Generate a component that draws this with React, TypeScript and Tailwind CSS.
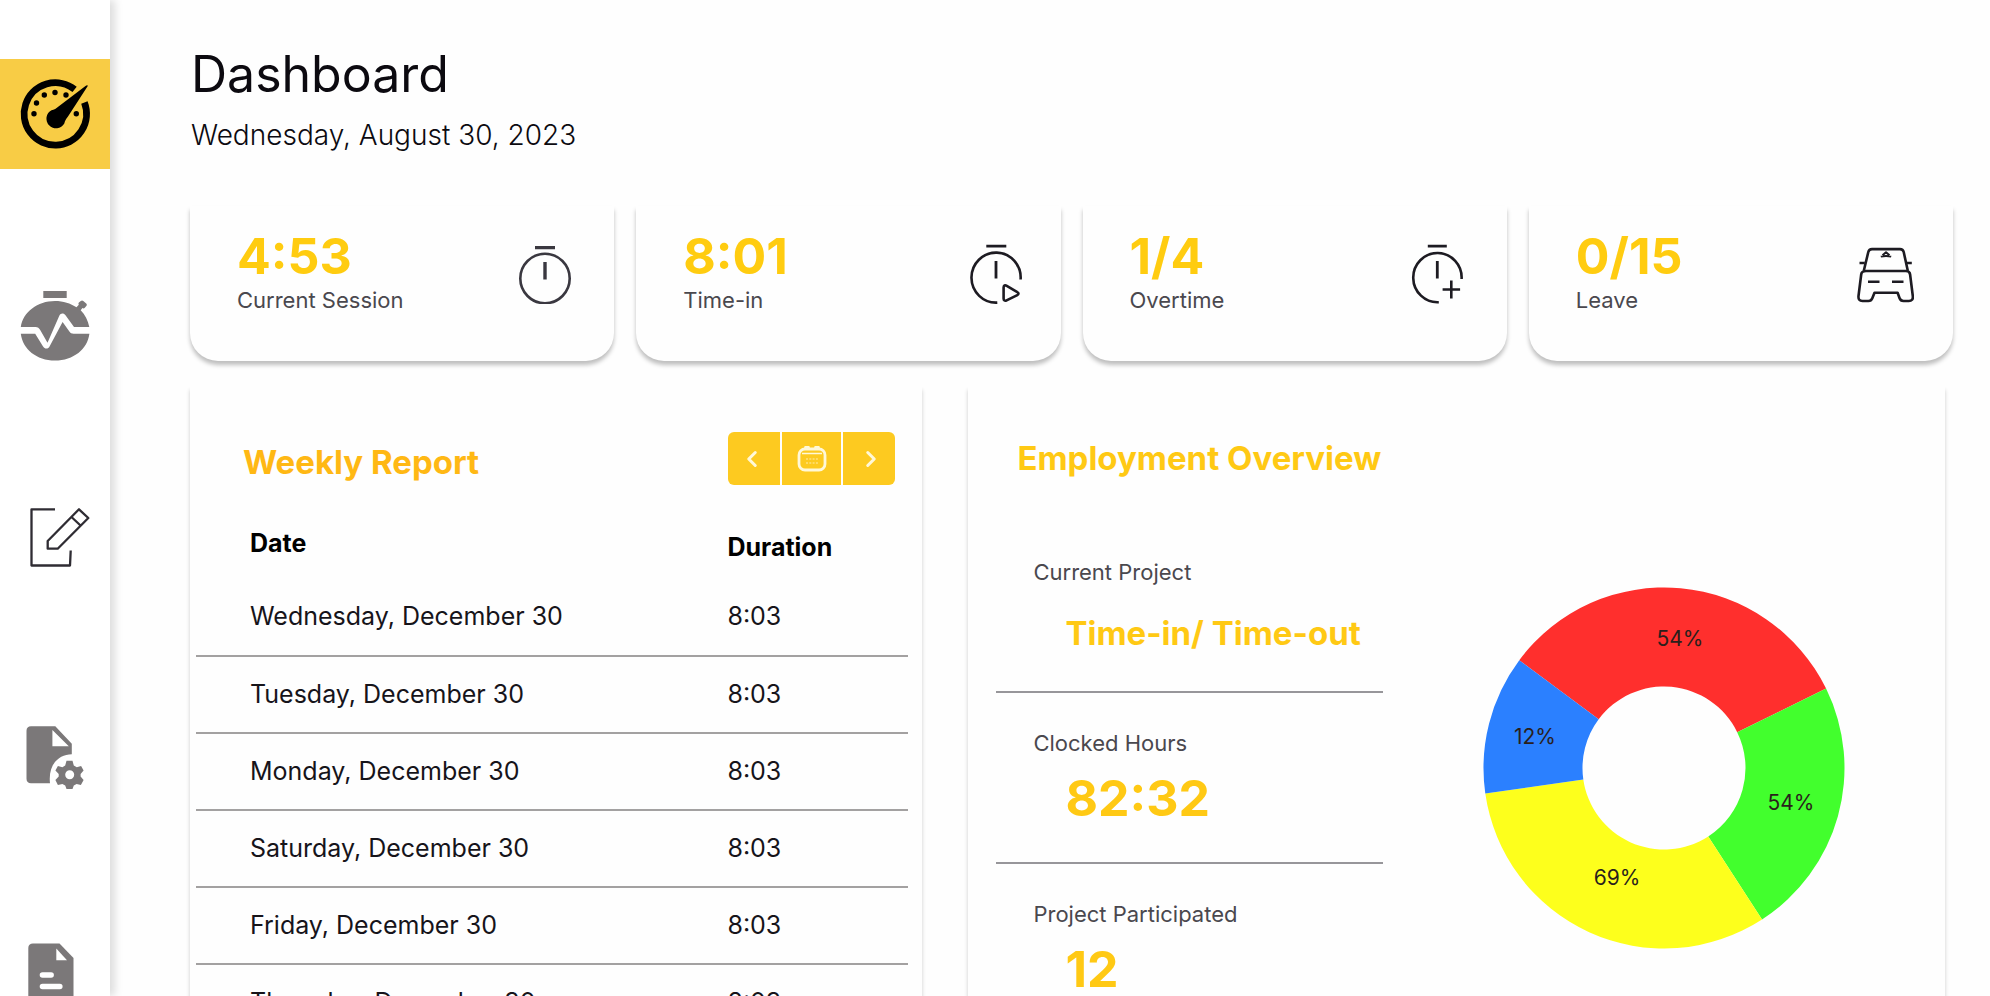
import type { ReactNode } from 'react'
import { LuChevronLeft, LuChevronRight } from 'react-icons/lu'

const days = ['Wednesday', 'Tuesday', 'Monday', 'Saturday', 'Friday', 'Thursday']

const overview = [
  { label: 'Current Project', value: 'Time-in/ Time-out', small: true },
  { label: 'Clocked Hours', value: '82:32', small: false },
  { label: 'Project Participated', value: '12', small: false },
]

// angles are degrees clockwise from 12 o'clock
const slices = [
  { label: '54%', from: -53.3, to: 63.9, color: '#ff2f2d', x: 197, y: 51 },
  { label: '54%', from: 63.9, to: 147.1, color: '#42ff2d', x: 308, y: 215 },
  { label: '69%', from: 147.1, to: 261.9, color: '#fdff1c', x: 134, y: 290 },
  { label: '12%', from: 261.9, to: 306.7, color: '#2b80ff', x: 52, y: 149 },
]

function point(r: number, deg: number) {
  const a = (deg * Math.PI) / 180
  return `${(181 + r * Math.sin(a)).toFixed(2)} ${(181 - r * Math.cos(a)).toFixed(2)}`
}

function slicePath(from: number, to: number) {
  return `M${point(180.5, from)}A180.5 180.5 0 0 1 ${point(180.5, to)}L${point(81.5, to)}A81.5 81.5 0 0 0 ${point(81.5, from)}Z`
}

function GaugeIcon() {
  return (
    <svg viewBox="0 0 110 110" className="h-full w-full">
      <path d="M74.6 30.4A31.2 31.2 0 1 0 84.4 43.6" fill="none" stroke="#000" strokeWidth="6.8" />
      <path d="M87.6 27.2L68 57.5C66 60 64.8 62 64.3 64.5A9.6 9.6 0 1 1 51.5 51.2C54 50.8 56.5 49.5 58.5 47.5L85.5 26.9C87 26 88 26.3 87.6 27.2Z" fill="#000" />
      <circle cx="34" cy="54.7" r="2.7" />
      <circle cx="36.5" cy="44" r="2.7" />
      <circle cx="44.3" cy="36" r="2.7" />
      <circle cx="55" cy="33.5" r="2.7" />
      <circle cx="66" cy="36" r="2.7" />
      <circle cx="76.3" cy="54.7" r="2.7" />
    </svg>
  )
}

function PulseWatchIcon() {
  return (
    <svg viewBox="0 0 110 110" className="h-full w-full" fill="#7b7879">
      <path d="M43.3 18h23.4v7H43.3z" />
      <path d="M20.8 54C23 39 37.5 28 55 28c8.300 0 15.500 2.300 21.500 6.300l2.300-2.600c-.6-.9-.4-1.900.4-2.500l1.600-1.300c.8-.7 1.700-.7 2.500 0l2.900 2.700c.8.8.8 1.700.1 2.500l-1.500 1.700c-.7.7-1.500.8-2.400.3l-1.700 2.200C85 41.500 88 47.500 89.300 54H74L65.500 42.300c-1.800-2.600-4.900-2.400-6.200.4L47.500 69.800 40.200 57c-1.200-2-2.300-3-4.700-3z" />
      <path d="M20.8 60.7h14.400l7.700 12.500c2 3.200 5.300 3 6.900-.3L62.600 49l6.600 9.300c1.300 1.800 2.400 2.400 4.400 2.400h15.800C87.500 76 73.500 87.500 55 87.500S22.700 76 20.800 60.700z" />
    </svg>
  )
}

function EditIcon() {
  return (
    <svg viewBox="0 0 110 110" className="h-full w-full" fill="none" stroke="#2f2c33" strokeWidth="2.3" strokeLinejoin="round">
      <path d="M55 22.300H31.500V78.500H70L70.700 63.500" />
      <path d="M47.700 61.700V54L79 22.300L88.300 31L57.700 61.700ZM72 30.500L80 38" />
    </svg>
  )
}

function FileGearIcon() {
  return (
    <svg viewBox="0 0 110 110" className="h-full w-full" fill="#7b7879">
      <path d="M31 25.300h24.300l16.500 17.500v10.400C58.500 53.500 48 63.500 50 82.300H31c-2.800 0-4.500-1.700-4.500-4.500v-48c0-2.800 1.700-4.500 4.500-4.500zM52.400 29v16.200h16.400z" />
      <path fillRule="evenodd" d="M66.500 59.800h6l1.300 4.800 3 1.700 4.300-1.400 2.500 4.600-3 3.400v2.600l3 3.400-2.700 5.200-4.300-1.100-2.800 1.600-1.300 3.400h-6l-1.300-3.400-2.800-1.600-4.500 1.100-2.500-5.200 3.300-3.400v-2.600l-3.300-3.400 2.500-4.600 4.500 1.400 2.800-1.700zM69.700 69.200a4.500 4.500 0 1 0 0 9 4.500 4.500 0 0 0 0-9z" />
    </svg>
  )
}

function FileIcon() {
  return (
    <svg viewBox="0 0 110 110" className="h-full w-full">
      <path d="M33 28.500h26.500L73.500 43v42c0 3-1.500 4.500-4.500 4.500H33c-3 0-4.700-1.500-4.700-4.500V33c0-3 1.700-4.500 4.700-4.500z" fill="#7b7879" />
      <path d="M56.300 33.500v11.800H67z" fill="#fff" />
      <path d="M42.500 60h8.600M42.500 71.500h17.300" stroke="#fff" strokeWidth="5.6" strokeLinecap="round" />
    </svg>
  )
}

function CalendarIcon() {
  return (
    <svg viewBox="0 0 32 30" className="h-[30px] w-8" fill="none" stroke="#fff8d8" strokeWidth="2.8">
      <rect x="3" y="5" width="26" height="21" rx="6" />
      <path d="M6 9.500h20" strokeWidth="1.5" />
      <path d="M9.500 3.400h3M19.500 3.400h3" strokeLinecap="round" />
      <path d="M10 15h12M10 19h12" strokeWidth="1.5" strokeDasharray="2 1.3" opacity="0.5" />
    </svg>
  )
}

const watchProps = {
  viewBox: '0 0 60 60',
  className: 'h-[60px] w-[60px]',
  fill: 'none',
  stroke: '#1d1b22',
  strokeWidth: 2.6,
}

const stats: { value: string; label: string; icon: ReactNode }[] = [
  {
    value: '4:53',
    label: 'Current Session',
    icon: (
      <svg {...watchProps} stroke="#3a3840">
        <circle cx="30" cy="34.5" r="24.7" />
        <path d="M20 3.600h20M30 18v17.500" strokeWidth="3.4" />
      </svg>
    ),
  },
  {
    value: '8:01',
    label: 'Time-in',
    icon: (
      <svg {...watchProps}>
        <path d="M58.600 35.500A24.600 25 0 1 0 35.300 58.600" />
        <path d="M24.300 2.200h20M34 17v17.500" strokeWidth="2.8" />
        <path d="M41.600 43.500v11c0 2 1.300 2.700 3 1.800l10.700-5.200c1.600-.8 1.600-2.200 0-3l-10.500-6.300c-1.800-1-3.200-.3-3.200 1.700z" />
      </svg>
    ),
  },
  {
    value: '1/4',
    label: 'Overtime',
    icon: (
      <svg {...watchProps}>
        <path d="M53.600 35A24.200 24.600 0 1 0 30.800 58.200" />
        <path d="M19.800 2.200h19M29.300 17v17.500" strokeWidth="2.8" />
        <path d="M34.600 45.500h17.500M43.300 36.500v18" />
      </svg>
    ),
  },
  {
    value: '0/15',
    label: 'Leave',
    icon: (
      <svg {...watchProps} strokeLinejoin="round">
        <path d="M9.800 26.700L14.300 8c.5-2 1.700-2.900 3.700-2.900h28c2 0 3.200.9 3.700 2.900l4.100 18.700" />
        <path d="M12 27h40c2.500 0 3.800 1 4.100 3.500l2.700 21.500c.4 3.400-1 5-4 5h-5.300c-2 0-3.200-.7-3.900-2.700l-2-5.600H20.500l-2.200 5.600c-.8 2-1.800 2.700-3.900 2.700H8.500c-3 0-4.300-1.600-4-5l2.700-21.500C7.500 28 9 27 12 27z" />
        <path d="M14 37.700h11.500M38 37.700h11.500M5.500 19h5.300M52.500 19h5.300" />
        <path d="M26.800 12.600c3.500-.8 7-.8 10.400 0M28.500 11.300l3.500-3 3.500 3" strokeWidth="2" />
      </svg>
    ),
  },
]

const navItems = [
  { name: 'Dashboard', icon: <GaugeIcon />, active: true },
  { name: 'Sessions', icon: <PulseWatchIcon />, active: false },
  { name: 'Edit', icon: <EditIcon />, active: false },
  { name: 'File settings', icon: <FileGearIcon />, active: false },
  { name: 'Documents', icon: <FileIcon />, active: false },
]

function Sidebar() {
  return (
    <nav className="flex w-[110px] shrink-0 flex-col gap-[104px] bg-white pt-[59px] shadow-[5px_0_8px_rgba(0,0,0,0.13)]">
      {navItems.map(item => (
        <a
          key={item.name}
          href="#"
          aria-label={item.name}
          className={item.active ? 'block h-[110px] shrink-0 bg-[#f8cc45]' : 'block h-[110px] shrink-0'}
        >
          {item.icon}
        </a>
      ))}
    </nav>
  )
}

function WeeklyReport() {
  return (
    <section className="pt-[46px] pr-[14px] pl-[6px] shadow-[0_4px_4px_rgba(0,0,0,0.2)]">
      <div className="flex items-end justify-between pr-[13px] pl-[47px]">
        <h2 className="text-[33px] leading-[46px] font-bold text-[#ffb814]">Weekly Report</h2>
        <div className="flex h-[53px] gap-[2px] overflow-hidden rounded-md text-[#fff8d8]">
          <button aria-label="Previous week" className="flex w-[52px] items-center justify-center bg-[#fdca20] pr-1">
            <LuChevronLeft size={26} strokeWidth={2.8} />
          </button>
          <button aria-label="Pick a week" className="flex w-[59px] items-center justify-center bg-[#fdca20]">
            <CalendarIcon />
          </button>
          <button aria-label="Next week" className="flex w-[52px] items-center justify-center bg-[#fdca20] pl-1">
            <LuChevronRight size={26} strokeWidth={2.8} />
          </button>
        </div>
      </div>
      <table className="w-full table-fixed border-collapse text-left text-[25px] leading-8 text-[#16141a]">
        <thead>
          <tr className="h-[94px] align-top text-black">
            <th className="pt-[42px] pl-[54px] font-bold">Date</th>
            <th className="w-[181px] pt-[46px] font-bold">Duration</th>
          </tr>
        </thead>
        <tbody>
          {days.map(day => (
            <tr key={day} className="h-[77px] border-b-2 border-[#a3a1a1]">
              <td className="pb-0.5 pl-[54px]">{day}, December 30</td>
              <td className="pb-0.5">8:03</td>
            </tr>
          ))}
        </tbody>
      </table>
    </section>
  )
}

function EmploymentOverview() {
  return (
    <section className="pt-[52px] pl-7 shadow-[0_4px_4px_rgba(0,0,0,0.2)]">
      <h2 className="pl-[21px] text-[33px] leading-10 font-bold text-[#ffc914]">Employment Overview</h2>
      <div className="mt-11 flex">
        <dl className="w-[387px] shrink-0">
          {overview.map(item => (
            <div key={item.label} className="border-b-2 border-[#97969a] pt-[34px] pb-9 pl-[37px] last:border-b-0">
              <dt className="text-[22px] leading-8 text-[#4a484e]">{item.label}</dt>
              <dd className="mt-[11px] flex h-14 items-end pl-8 font-bold text-[#ffc914]">
                <span className={item.small ? 'text-[33px] leading-[44px] whitespace-nowrap' : 'text-[50px] leading-[56px]'}>
                  {item.value}
                </span>
              </dd>
            </div>
          ))}
        </dl>
        <div className="flex grow justify-center pt-[65px]">
          <svg viewBox="0 0 362 362" className="h-[362px] w-[362px]" role="img" aria-label="Employment breakdown">
            {slices.map(s => (
              <path key={s.from} d={slicePath(s.from, s.to)} fill={s.color} />
            ))}
            {slices.map(s => (
              <text key={s.from} x={s.x} y={s.y + 8} textAnchor="middle" className="fill-[#2a1f1c] text-[21px]">
                {s.label}
              </text>
            ))}
          </svg>
        </div>
      </div>
    </section>
  )
}

export default function App() {
  return (
    <div className="flex h-screen overflow-hidden bg-[#fefefe] font-['Inter',sans-serif] text-[#0c0a10]">
      <Sidebar />
      <main className="min-w-0 grow pt-11 pr-[37px] pl-20">
        <header className="pl-px">
          <h1 className="text-[50px] leading-[60px]">Dashboard</h1>
          <p className="mt-[11px] text-[28px] leading-10 font-light">Wednesday, August 30, 2023</p>
        </header>

        <div className="mt-[51px] grid grid-cols-4 gap-[22px]">
          {stats.map(stat => (
            <section
              key={stat.label}
              className="flex items-start justify-between rounded-b-[28px] bg-[#fefefe] pt-[22px] pr-[39px] pb-[45px] pl-[47px] shadow-[0_4px_4px_rgba(0,0,0,0.25)]"
            >
              <div>
                <p className="text-[50px] leading-[56px] font-bold text-[#ffcc10]">{stat.value}</p>
                <p className="text-[22px] leading-8 text-[#4a484e]">{stat.label}</p>
              </div>
              <div className="mt-4">{stat.icon}</div>
            </section>
          ))}
        </div>

        <div className="mt-[25px] grid grid-cols-[3fr_4fr] gap-[46px] pr-2">
          <WeeklyReport />
          <EmploymentOverview />
        </div>
      </main>
    </div>
  )
}
